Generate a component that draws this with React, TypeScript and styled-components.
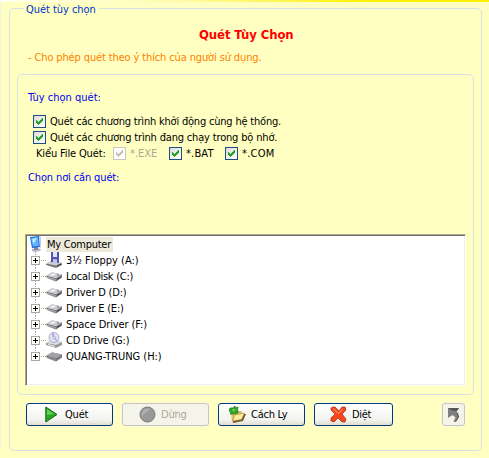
import React from 'react';
import styled, { createGlobalStyle, css } from 'styled-components';

const GlobalStyle = createGlobalStyle`
  * { box-sizing: border-box; }
  html, body { margin: 0; padding: 0; overflow: hidden; }
  body {
    background: #ffffc1;
    font-family: "DejaVu Sans Condensed", "DejaVu Sans", sans-serif;
    font-stretch: condensed;
    font-size: 11px;
    color: #000;
  }
`;

const Page = styled.div`
  width: 489px;
  height: 458px;
  display: flex;
  flex-direction: column;
  background: linear-gradient(#f6f3e2, #f6f3e2) 0 2px / 1px 448px no-repeat, #ffffc1;
`;

const TopStrip = styled.div`
  height: 2px;
  background: linear-gradient(90deg, #fffff0 0, #fffcae 35%, #fff56a 52%, #fff200 75%, #ffee00 100%);
`;

const Group = styled.section`
  margin: 6px 0 0 9px;
  width: 473px;
  height: 443px;
  border: 1px solid #d8e0e8;
  border-radius: 5px;
`;

const Label = styled.span<{ $track?: number; $color?: string }>`
  white-space: nowrap;
  letter-spacing: ${p => p.$track ?? 0}px;
  color: ${p => p.$color ?? 'inherit'};
`;

const Legend = styled.div`
  width: 75px;
  height: 16px;
  margin: -7px 0 0 14px;
  padding-left: 2px;
  line-height: 16px;
  background: #ffffc1;
`;

const Title = styled.h1`
  margin: 9px 0 0 189px;
  font-size: 13px;
  line-height: 16px;
  font-weight: bold;
`;

const Subtitle = styled.p`
  margin: 8px 0 0 18px;
  line-height: 14px;
`;

const Panel = styled.div`
  margin: 9px 0 0 7px;
  width: 457px;
  height: 321px;
  border: 1px solid #d8e0e8;
  border-radius: 5px;
  padding: 16px 0 0 7px;
`;

const Heading = styled.h2`
  margin: 0;
  padding-left: 3px;
  font-size: 11px;
  font-weight: normal;
  line-height: 14px;
`;

const Options = styled.div`
  margin: 8px 0 10px 8px;
`;

const OptionRow = styled.div`
  display: flex;
  align-items: center;
  height: 16px;
`;

const KindLabel = styled.div`
  width: 80px;
  padding-left: 3px;
`;

const Option = styled.label<{ $width?: number }>`
  display: flex;
  align-items: center;
  gap: 4px;
  width: ${p => (p.$width ? `${p.$width}px` : 'auto')};
`;

const Box = styled.span<{ $disabled?: boolean }>`
  flex: none;
  width: 13px;
  height: 13px;
  border: 1px solid ${p => (p.$disabled ? '#cac8bb' : '#1c5180')};
  background: ${p => (p.$disabled ? '#fff' : 'linear-gradient(135deg, #dcdcd7, #fff)')};
  svg { display: block; }
`;

const Tree = styled.div`
  width: 441px;
  height: 152px;
  margin-top: 49px;
  padding-left: 1px;
  background: #fff;
  border: 1px solid;
  border-color: #aca899 #fff #fff #aca899;
  box-shadow: inset 1px 1px #716f64, inset -1px -1px #f1efe2;
`;

const TreeRow = styled.div<{ $root?: boolean }>`
  display: flex;
  align-items: center;
  height: 16px;
  padding-left: ${p => (p.$root ? 2 : 4)}px;
  ${p => p.$root && css`margin-top: 1px;`}
`;

const Expander = styled.span`
  flex: none;
  width: 15px;
  height: 16px;
  svg { display: block; }
`;

const RowIcon = styled.span`
  flex: none;
  width: 16px;
  height: 16px;
  svg { display: block; }
`;

const RowText = styled.span<{ $selected?: boolean }>`
  height: 15px;
  line-height: 15px;
  padding-left: ${p => (p.$selected ? 1 : 4)}px;
  margin-left: ${p => (p.$selected ? 1 : 0)}px;
  width: ${p => (p.$selected ? '67px' : 'auto')};
  background: ${p => (p.$selected ? '#ece9d8' : 'transparent')};
  white-space: nowrap;
`;

const Actions = styled.div`
  display: flex;
  margin: 8px 0 0 16px;
  gap: 9px;
`;

const Button = styled.button<{ $width: number; $right?: boolean }>`
  width: ${p => p.$width}px;
  height: 23px;
  padding: 0;
  display: flex;
  align-items: center;
  font: inherit;
  line-height: 14px;
  color: #000;
  border: 1px solid #003c74;
  border-radius: 3px;
  background: linear-gradient(#fff, #f3f3ef 75%, #e0ddd2);
  box-shadow: 0 0 0 1px #fbf8dd;
  margin-left: ${p => (p.$right ? '40px' : '0')};
  &:disabled {
    color: #aca899;
    border-color: #c9c7ba;
    background: #f5f4ea;
  }
  svg { display: block; flex: none; }
`;

const IconSlot = styled.span<{ $left: number; $gap: number }>`
  padding-left: ${p => p.$left}px;
  padding-right: ${p => p.$gap}px;
`;

function Check({ disabled }: { disabled?: boolean }) {
  return (
    <Box $disabled={disabled}>
      <svg width="11" height="11" viewBox="0 0 11 11" shapeRendering="crispEdges">
        <path d="M2 4h1v1h1v1h1v-1h1v-1h1v-1h1v-1h1v3h-1v1h-1v1h-1v1h-1v1h-1v-1h-1v-1h-1z" fill={disabled ? '#c3c1b8' : '#21a121'} />
      </svg>
    </Box>
  );
}

function Plus({ last }: { last?: boolean }) {
  return (
    <Expander>
      <svg width="15" height="16" shapeRendering="crispEdges">
        <path d="M4.500 0v4" stroke="#aca899" strokeDasharray="1 1" />
        {!last && <path d="M4.500 13v3" stroke="#aca899" strokeDasharray="1 1" />}
        <path d="M10 8.500h5" stroke="#aca899" strokeDasharray="1 1" />
        <rect x=".5" y="4.500" width="8" height="8" fill="#fff" stroke="#aca899" />
        <path d="M2 8.500h5M4.500 6v5" stroke="#000" />
      </svg>
    </Expander>
  );
}

function MonitorIcon() {
  return (
    <svg width="16" height="16" viewBox="0 0 16 16">
      <path d="M3 13l5-1 4 1-1 2-5 1-3-1z" fill="#b4b6c6" />
      <path d="M5 11h4v3H5z" fill="#8287a6" />
      <path d="M1 1l9-1 1 11-8 1z" fill="#1e68d8" />
      <path d="M2 2l7-1 .8 9-6 .6z" fill="#5db5ff" />
      <path d="M3 3l5-1-3.500 6z" fill="#bdeaff" />
      <path d="M10 0l2 1v10l-1 1z" fill="#c9c8da" />
    </svg>
  );
}

function DriveIcon({ kind }: { kind: string }) {
  if (kind === 'floppy') {
    return (
      <svg width="16" height="16" viewBox="0 0 16 16">
        <path d="M0 12l5-3 11 2v2l-6 3-10-3z" fill="#77797c" />
        <path d="M0 11.500l5-3 11 2.500-6 2.500z" fill="#cfd0d4" />
        <path d="M5 0h2v4l4 .5V0h2v11l-8-1z" fill="#5054b4" />
        <path d="M7 0h4v5H7z" fill="#e3e6f6" />
        <path d="M7 7l4 .5V12l-4-1z" fill="#c1c6e6" />
        <path d="M11 14l4-2" stroke="#34363b" />
      </svg>
    );
  }
  if (kind === 'cd') {
    return (
      <svg width="16" height="16" viewBox="0 0 16 16">
        <path d="M0 11l5-3 11 2v3l-6 3-10-3z" fill="#98999d" />
        <path d="M0 11l5-3 11 2-6 3z" fill="#dedee1" />
        <circle cx="8" cy="5.500" r="5" fill="#e0e0f6" stroke="#aeb0c8" />
        <path d="M8 5.500L5 1.500l3-1zM8 5.500l4 3-2 1z" fill="#aeaaf2" />
        <circle cx="8" cy="5.500" r="1.300" fill="#fff" stroke="#8b8bb6" strokeWidth=".7" />
        <path d="M2 12.500l7 2" stroke="#f2f2f2" />
      </svg>
    );
  }
  const plain = kind === 'removable';
  return (
    <svg width="16" height="16" viewBox="0 0 16 16">
      <path d="M0 8l6-3.500L16 6.500v3L10 13.500 1 10z" fill="#77787c" />
      <path d="M0 7.800l6-3.500 10 2.200-6 3.700z" fill={plain ? '#a3a3a5' : '#cbccce'} />
      <path d="M.5 8.500l9.500 2.700v1.500L1 9.800z" fill={plain ? '#8c8d90' : '#a6a7aa'} />
      {!plain && (
        <>
          <path d="M4 7l3-1.500 3 .8L7 8z" fill="#f6f6f8" />
          <path d="M11 11.500l3.500-2.300" stroke="#34363b" />
          <path d="M11 7h2" stroke="#777" />
        </>
      )}
    </svg>
  );
}

function PlayIcon() {
  return (
    <svg width="13" height="17" viewBox="0 0 13 17">
      <path d="M.8 1v15L12 8.500z" fill="#27a922" stroke="#176616" />
      <path d="M2 3v6l7-1z" fill="#67cf55" />
    </svg>
  );
}

function StopIcon() {
  return (
    <svg width="17" height="17" viewBox="0 0 17 17">
      <circle cx="8.500" cy="8.500" r="7.500" fill="#999" stroke="#777" />
      <path d="M3 10a6 6 0 0 1 8-7z" fill="#b1b1b1" />
    </svg>
  );
}

function FolderIcon() {
  return (
    <svg width="17" height="17" viewBox="0 0 17 17">
      <path d="M3 8l7-3 3 1v2h4l-3 7-10 2z" fill="#75592a" />
      <path d="M2 7l7-1 2-1 2 1-1 6-9 3z" fill="#e6c163" />
      <path d="M3.500 15l2.500-6 9.500-2-3 6.500z" fill="#fff0a8" stroke="#a8832e" strokeWidth=".6" />
      <path d="M1 2l3 0 2-2 1 2 2-1-.5 3L9 7 5 8 1 8l1-2-2-1z" fill="#31a92b" stroke="#197618" strokeWidth=".7" />
      <path d="M3 3l4 0-3 3z" fill="#72cf49" />
    </svg>
  );
}

function CrossIcon() {
  return (
    <svg width="17" height="17" viewBox="0 0 17 17">
      <path d="M1 2l2-1h2l4 4 3-4h3l1 3-4 4 4 5-1 3h-3l-4-4-4 4-3-1v-3l4-4-4-4z" fill="#f4471e" stroke="#b93418" strokeWidth=".8" />
      <path d="M3 2.500l5.500 5L13 3" fill="none" stroke="#ff7f55" strokeWidth="1.200" />
    </svg>
  );
}

function ArrowIcon() {
  return (
    <svg width="13" height="16" viewBox="0 0 13 16">
      <path d="M1 1H12L9.500 5 11 6l1 4-3 5-2.500-.5 2-4L5.500 8 1 11z" fill="#808080" />
      <path d="M1 1H12L9.500 4 5 3.500z" fill="#555" />
      <path d="M10 5.500l1.500 4.500-3 4.500" stroke="#555" fill="none" />
    </svg>
  );
}

const drives = [
  { name: '3½ Floppy (A:)', kind: 'floppy', track: 0 },
  { name: 'Local Disk (C:)', kind: 'hdd', track: -0.27 },
  { name: 'Driver D (D:)', kind: 'hdd', track: -0.2 },
  { name: 'Driver E (E:)', kind: 'hdd', track: -0.2 },
  { name: 'Space Driver (F:)', kind: 'hdd', track: -0.1 },
  { name: 'CD Drive (G:)', kind: 'cd', track: -0.2 },
  { name: 'QUANG-TRUNG (H:)', kind: 'removable', track: -0.04 },
];

export default function App() {
  return (
    <>
      <GlobalStyle />
      <Page>
        <TopStrip />
        <Group>
          <Legend><Label $color="#0033cc" $track={-0.04}>Quét tùy chọn</Label></Legend>
          <Title><Label $color="#ff0000" $track={-0.1}>Quét Tùy Chọn</Label></Title>
          <Subtitle><Label $color="#ff8000" $track={-0.13}>- Cho phép quét theo ý thích của người sử dụng.</Label></Subtitle>
          <Panel>
            <Heading><Label $color="#0000f0">Tùy chọn quét:</Label></Heading>
            <Options>
              <OptionRow><Option><Check /><Label $track={-0.2}>Quét các chương trình khởi động cùng hệ thống.</Label></Option></OptionRow>
              <OptionRow><Option><Check /><Label $track={-0.17}>Quét các chương trình đang chạy trong bộ nhớ.</Label></Option></OptionRow>
              <OptionRow>
                <KindLabel><Label $track={-0.14}>Kiểu File Quét:</Label></KindLabel>
                <Option $width={56}><Check disabled /><Label $color="#aca899">*.EXE</Label></Option>
                <Option $width={56}><Check /><Label $track={0.15}>*.BAT</Label></Option>
                <Option><Check /><Label $track={0.25}>*.COM</Label></Option>
              </OptionRow>
            </Options>
            <Heading><Label $color="#0000f0" $track={-0.13}>Chọn nơi cần quét:</Label></Heading>
            <Tree>
              <TreeRow $root>
                <RowIcon><MonitorIcon /></RowIcon>
                <RowText $selected><Label $track={-0.25}>My Computer</Label></RowText>
              </TreeRow>
              {drives.map((d, i) => (
                <TreeRow key={d.name}>
                  <Plus last={i === drives.length - 1} />
                  <RowIcon><DriveIcon kind={d.kind} /></RowIcon>
                  <RowText><Label $track={d.track}>{d.name}</Label></RowText>
                </TreeRow>
              ))}
            </Tree>
          </Panel>
          <Actions>
            <Button $width={87}><IconSlot $left={18} $gap={7}><PlayIcon /></IconSlot><Label $track={-0.2}>Quét</Label></Button>
            <Button $width={87} disabled><IconSlot $left={16} $gap={5}><StopIcon /></IconSlot><Label $track={-0.2}>Dừng</Label></Button>
            <Button $width={87}><IconSlot $left={10} $gap={5}><FolderIcon /></IconSlot><Label $track={-0.25}>Cách Ly</Label></Button>
            <Button $width={79}><IconSlot $left={15} $gap={5}><CrossIcon /></IconSlot><Label $track={-0.35}>Diệt</Label></Button>
            <Button $width={23} $right disabled aria-label="Arrow"><IconSlot $left={4} $gap={0}><ArrowIcon /></IconSlot></Button>
          </Actions>
        </Group>
      </Page>
    </>
  );
}
